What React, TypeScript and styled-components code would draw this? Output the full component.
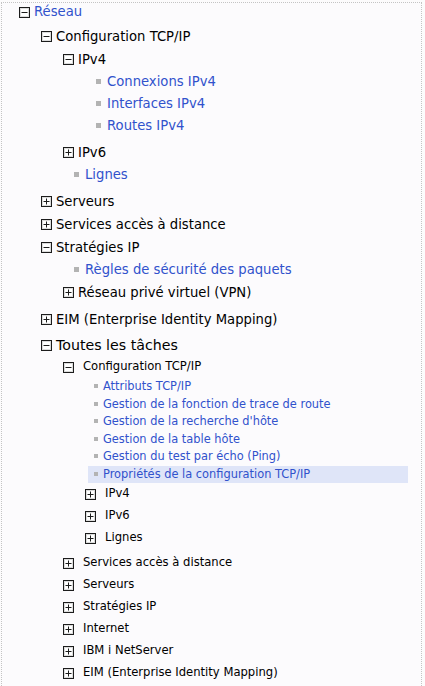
import React from "react";
import styled, { createGlobalStyle, css } from "styled-components";

type Variant = "root" | "main" | "heading" | "small" | "tiny";

interface TreeNode {
  label: string;
  variant: Variant;
  leaf?: boolean;
  open?: boolean;
  link?: boolean;
  highlighted?: boolean;
  children?: TreeNode[];
}

const GlobalStyle = createGlobalStyle`
  html, body {
    margin: 0;
    padding: 0;
    background: #fcfbfc;
  }
  body {
    font-family: "DejaVu Sans", Verdana, sans-serif;
    color: #000;
  }
  ul {
    list-style: none;
    margin: 0;
    padding: 0;
  }
`;

const Frame = styled.div`
  margin: 2px 3px 0 1px;
  min-height: calc(100vh - 2px);
  box-sizing: border-box;
  border-top: 1px dotted #c4c4c4;
  border-left: 1px dotted #c4c4c4;
  border-right: 1px dotted #c4c4c4;
  background: #fcfbfd;
  overflow: hidden;
`;

const fontSizes: Record<Variant, string> = {
  root: "13.2px",
  main: "13.2px",
  heading: "14.2px",
  small: "11.6px",
  tiny: "11.4px",
};

const rowHeight = (v: Variant, leaf?: boolean) => {
  switch (v) {
    case "root":
      return 18;
    case "main":
      return leaf ? 22 : 23;
    case "heading":
      return 22;
    case "small":
      return 22;
    case "tiny":
      return 17.5;
  }
};

const Group = styled.ul<{ $variant: Variant }>`
  ${({ $variant }) =>
    $variant === "root"
      ? css`margin-top: 4px;`
      : $variant === "small"
      ? css`margin-bottom: 3px;`
      : css`margin-bottom: 4px;`}
`;

const Item = styled.li``;

const Row = styled.div<{ $variant: Variant; $leaf?: boolean; $depth: number }>`
  display: flex;
  align-items: center;
  box-sizing: border-box;
  height: ${({ $variant, $leaf }) => rowHeight($variant, $leaf)}px;
  padding-left: ${({ $depth }) => 17 + 22 * $depth}px;
  font-size: ${({ $variant }) => fontSizes[$variant]};
  white-space: nowrap;
  ${({ $variant }) => $variant === "heading" && css`margin-top: 3px;`}
`;

const Hit = styled.div<{ $variant: Variant; $highlighted?: boolean }>`
  display: flex;
  align-items: center;
  height: 100%;
  ${({ $variant }) =>
    $variant === "tiny"
      ? css`
          margin-left: 3px;
          padding-left: 6px;
          width: 320px;
          box-sizing: border-box;
          gap: 5px;
        `
      : $variant === "small"
      ? css`gap: 9px;`
      : css`gap: 4px;`}
  ${({ $highlighted }) =>
    $highlighted &&
    css`
      background: #dfe5f8;
    `}
`;

const LeafHit = styled.div`
  display: flex;
  align-items: center;
  gap: 6px;
  margin-left: 11px;
`;

const Bullet = styled.span<{ $size: number }>`
  display: inline-block;
  flex: none;
  width: ${({ $size }) => $size}px;
  height: ${({ $size }) => $size}px;
  background: #b3b3b3;
  margin-top: -1px;
`;

const Label = styled.span<{ $link?: boolean }>`
  color: ${({ $link }) => ($link ? "#3152cc" : "#000")};
  line-height: 1;
`;

const ToggleBox = ({ open }: { open: boolean }) => (
  <svg width="11" height="11" viewBox="0 0 11 11" style={{ flex: "none" }}>
    <rect x="0.5" y="0.5" width="10" height="10" fill="#fff" stroke="#1c1c1c" />
    <rect x="1.5" y="1.5" width="8" height="8" fill="none" stroke="#dcdcdc" />
    <line x1="2.5" y1="5.5" x2="8.5" y2="5.5" stroke="#1c1c1c" />
    {!open && <line x1="5.5" y1="2.5" x2="5.5" y2="8.5" stroke="#1c1c1c" />}
  </svg>
);

const small = (label: string, children?: TreeNode[]): TreeNode => ({
  label,
  variant: "small",
  open: !!children,
  children,
});

const tiny = (label: string, highlighted = false): TreeNode => ({
  label,
  variant: "tiny",
  leaf: true,
  link: true,
  highlighted,
});

const main = (label: string, children?: TreeNode[]): TreeNode => ({
  label,
  variant: "main",
  open: !!children,
  children,
});

const mainLeaf = (label: string): TreeNode => ({
  label,
  variant: "main",
  leaf: true,
  link: true,
});

const tree: TreeNode = {
  label: "Réseau",
  variant: "root",
  open: true,
  link: true,
  children: [
    main("Configuration TCP/IP", [
      main("IPv4", [
        mainLeaf("Connexions IPv4"),
        mainLeaf("Interfaces IPv4"),
        mainLeaf("Routes IPv4"),
      ]),
      main("IPv6"),
      mainLeaf("Lignes"),
    ]),
    main("Serveurs"),
    main("Services accès à distance"),
    main("Stratégies IP", [
      mainLeaf("Règles de sécurité des paquets"),
      main("Réseau privé virtuel (VPN)"),
    ]),
    main("EIM (Enterprise Identity Mapping)"),
    {
      label: "Toutes les tâches",
      variant: "heading",
      open: true,
      children: [
        small("Configuration TCP/IP", [
          tiny("Attributs TCP/IP"),
          tiny("Gestion de la fonction de trace de route"),
          tiny("Gestion de la recherche d'hôte"),
          tiny("Gestion de la table hôte"),
          tiny("Gestion du test par écho (Ping)"),
          tiny("Propriétés de la configuration TCP/IP", true),
          small("IPv4"),
          small("IPv6"),
          small("Lignes"),
        ]),
        small("Services accès à distance"),
        small("Serveurs"),
        small("Stratégies IP"),
        small("Internet"),
        small("IBM i NetServer"),
        small("EIM (Enterprise Identity Mapping)"),
      ],
    },
  ],
};

const TreeRow = ({ node, depth }: { node: TreeNode; depth: number }) => {
  if (node.leaf && node.variant === "main") {
    return (
      <Row $variant={node.variant} $leaf $depth={depth}>
        <LeafHit>
          <Bullet $size={5} />
          <Label $link={node.link}>{node.label}</Label>
        </LeafHit>
      </Row>
    );
  }
  if (node.leaf) {
    return (
      <Row $variant={node.variant} $leaf $depth={depth}>
        <Hit $variant={node.variant} $highlighted={node.highlighted}>
          <Bullet $size={4} />
          <Label $link={node.link}>{node.label}</Label>
        </Hit>
      </Row>
    );
  }
  return (
    <Row $variant={node.variant} $depth={depth}>
      <Hit $variant={node.variant}>
        <ToggleBox open={!!node.open} />
        <Label $link={node.link}>{node.label}</Label>
      </Hit>
    </Row>
  );
};

const TreeBranch = ({ node, depth }: { node: TreeNode; depth: number }) => {
  const kids = node.open ? node.children : undefined;
  const groupVariant: Variant =
    node.variant === "root" ? "root" : node.variant === "heading" ? "main" : node.variant;
  return (
    <Item>
      <TreeRow node={node} depth={depth} />
      {kids && kids.length > 0 && (
        <Group $variant={groupVariant}>
          {kids.map((child, i) => (
            <TreeBranch key={i} node={child} depth={depth + 1} />
          ))}
        </Group>
      )}
    </Item>
  );
};

export default function App() {
  return (
    <>
      <GlobalStyle />
      <Frame>
        <ul>
          <TreeBranch node={tree} depth={0} />
        </ul>
      </Frame>
    </>
  );
}
